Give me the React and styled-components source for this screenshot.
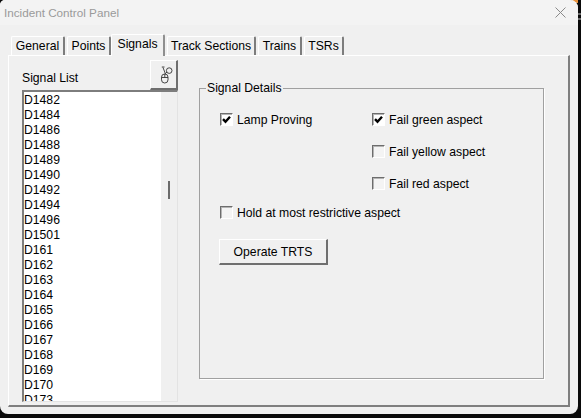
import React from "react";
import styled, { createGlobalStyle } from "styled-components";

const Global = createGlobalStyle`
  html, body { margin: 0; padding: 0; overflow: hidden; }
  html { background: #0a0a0a; }
  body {
    width: 581px;
    height: 418px;
    font-family: "Liberation Sans", Arial, sans-serif;
    font-size: 12.2px;
    color: #000;
    background:
      linear-gradient(#e8923c, #e8923c) no-repeat 572px 0 / 6px 3px,
      repeating-linear-gradient(#6a6a6a 0 2px, transparent 2px 5px) no-repeat 578px 13px / 3px 9px,
      #0a0a0a;
  }
  * { box-sizing: border-box; }
`;

const Window = styled.div`
  width: 578px;
  height: 414px;
  background: #f0f0f0;
  border-radius: 5px 8px 8px 8px;
  overflow: hidden;
  display: flex;
  flex-direction: column;
`;
const TitleBar = styled.div`
  height: 25px;
  flex: none;
  background: #f3f3f3;
  display: flex;
  align-items: center;
  justify-content: space-between;
  padding: 0 12px 0 4px;
  color: #9a9a9a;
  font-size: 11.7px;
`;
const Close = styled.svg`
  width: 11px;
  height: 11px;
  display: block;
`;
const Body = styled.div`
  flex: 1;
  min-height: 0;
  padding: 9px 8px 7px 8px;
  display: flex;
  flex-direction: column;
`;
const TabStrip = styled.div`
  height: 21px;
  flex: none;
  display: flex;
  align-items: flex-end;
  padding-left: 3px;
  gap: 2px;
  position: relative;
  z-index: 1;
`;
const Tab = styled.div`
  width: ${(p) => p.$w}px;
  height: ${(p) => (p.$active ? 22 : 19)}px;
  margin: ${(p) => (p.$active ? "0 0 -1px -2px" : "0")};
  background: #f0f0f0;
  border-top: 1px solid #ffffff;
  border-left: 1px solid #ffffff;
  border-right: 2px solid ${(p) => (p.$active ? "#8f8f8f" : "#7d7d7d")};
  border-radius: 2px 2px 0 0;
  text-align: center;
  line-height: 19px;
  white-space: nowrap;
`;
const Panel = styled.div`
  flex: 1;
  display: flex;
  background: #f0f0f0;
  border-top: 1px solid #ffffff;
  border-left: 1px solid #ffffff;
  border-right: 2px solid #7f7f7f;
  border-bottom: 2px solid #7f7f7f;
  padding: 4px 0 3px 13px;
  min-height: 0;
`;
const LeftColumn = styled.div`
  width: 156px;
  display: flex;
  flex-direction: column;
  min-height: 0;
`;
const ListHeader = styled.div`
  height: 30px;
  flex: none;
  display: flex;
  align-items: flex-end;
  justify-content: space-between;
`;
const ListLabel = styled.span`
  padding-bottom: 5px;
`;
const IconButton = styled.button`
  width: 28px;
  height: 30px;
  padding: 0 0 0 8px;
  background: #f0f0f0;
  border: 0;
  border-top: 1px solid #ffffff;
  border-left: 1px solid #ffffff;
  border-right: 2px solid #6f6f6f;
  border-bottom: 2px solid #6f6f6f;
  display: flex;
  align-items: center;
  justify-content: center;
`;
const ListBox = styled.div`
  flex: 1;
  display: flex;
  min-height: 0;
  border-top: 2px solid #7d7d7d;
  border-left: 2px solid #7d7d7d;
  border-right: 1px solid #e3e3e3;
  border-bottom: 1px solid #e3e3e3;
`;
const Rows = styled.div`
  width: 137px;
  background: #fff;
  overflow: hidden;
  padding-top: 1px;
`;
const Row = styled.div`
  height: 15px;
  line-height: 15px;
`;
const Scrollbar = styled.div`
  flex: 1;
  background: #f0f0f0;
  display: flex;
  justify-content: center;
  padding-top: 89px;
`;
const Thumb = styled.div`
  width: 2px;
  height: 18px;
  background: #6b6b6b;
`;
const Group = styled.fieldset`
  width: 345px;
  height: 298px;
  margin: 21px 0 0 21px;
  padding: 0;
  border: 1px solid #a0a0a0;
  border-radius: 0;
  box-shadow: 1px 1px 0 #fff;
  display: flex;
  flex-direction: column;
`;
const Legend = styled.legend`
  margin-left: 6px;
  padding: 0 1px;
  line-height: 15px;
`;
const Content = styled.div`
  padding: 16px 0 0 20px;
  display: flex;
  flex-direction: column;
`;
const AspectGrid = styled.div`
  display: grid;
  grid-template-columns: 152px 1fr;
  grid-auto-rows: 32px;
`;
const CheckRow = styled.label`
  display: flex;
  align-items: center;
  gap: 4px;
  height: 16px;
  grid-column: ${(p) => p.$col || "auto"};
`;
const Box = styled.span`
  width: 13px;
  height: 13px;
  flex: none;
  margin-top: -2px;
  background: ${(p) => (p.$checked ? "#fff" : "#f4f4f4")};
  border-top: 1px solid #6d6d6d;
  border-left: 1px solid #6d6d6d;
  border-right: 1px solid #ffffff;
  border-bottom: 1px solid #ffffff;
  box-shadow: inset 1px 1px 0 #b4b4b4;
  display: block;
  position: relative;
`;
const Tick = styled.svg`
  position: absolute;
  left: 1px;
  top: 1px;
  width: 9px;
  height: 9px;
`;
const HoldRow = styled.div`
  margin: -3px 0 0 0;
`;
const OperateButton = styled.button`
  margin: 18px 0 0 -1px;
  width: 109px;
  height: 26px;
  background: #f0f0f0;
  border: 0;
  border-top: 1px solid #fff;
  border-left: 1px solid #fff;
  border-right: 2px solid #6f6f6f;
  border-bottom: 2px solid #6f6f6f;
  font-family: inherit;
  font-size: inherit;
  color: #000;
  padding: 0;
`;

const Check = ({ checked, label, col }) => (
  <CheckRow $col={col}>
    <Box $checked={checked}>
      {checked && (
        <Tick viewBox="0 0 9 9">
          <path d="M1 4.2 L3.5 6.7 L8 1.8" fill="none" stroke="#000" strokeWidth="2.4" />
        </Tick>
      )}
    </Box>
    {label}
  </CheckRow>
);

const signals = ["D1482","D1484","D1486","D1488","D1489","D1490","D1492","D1494","D1496","D1501","D161","D162","D163","D164","D165","D166","D167","D168","D169","D170","D173"];
const tabs = [["General",54],["Points",44],["Signals",54,true],["Track Sections",89],["Trains",44],["TSRs",40]];

export default function App() {
  return (
    <>
      <Global />
      <Window>
        <TitleBar>
          Incident Control Panel
          <Close viewBox="0 0 11 11">
            <path d="M.5 .5 L10.5 10.5 M10.5 .5 L.5 10.5" stroke="#8a8a8a" strokeWidth="1" fill="none" />
          </Close>
        </TitleBar>
        <Body>
          <TabStrip>
            {tabs.map(([t, w, a]) => (
              <Tab key={t} $w={w} $active={a}>{t}</Tab>
            ))}
          </TabStrip>
          <Panel>
            <LeftColumn>
              <ListHeader>
                <ListLabel>Signal List</ListLabel>
                <IconButton aria-label="mouse">
                  <svg width="16" height="18" viewBox="0 0 16 18" fill="none" stroke="#333" strokeWidth="0.9">
                    <rect x="1.5" y="8" width="6.5" height="9" rx="3.2" />
                    <path d="M1.5 11.5 H8 M4.8 8 V11.5 M5.5 8 L3 1.5 M1.8 1 H4.5 M5.5 7.5 L7 6" />
                    <circle cx="9.2" cy="4.6" r="2.8" />
                  </svg>
                </IconButton>
              </ListHeader>
              <ListBox>
                <Rows>
                  {signals.map((s) => <Row key={s}>{s}</Row>)}
                </Rows>
                <Scrollbar><Thumb /></Scrollbar>
              </ListBox>
            </LeftColumn>
            <Group>
              <Legend>Signal Details</Legend>
              <Content>
                <AspectGrid>
                  <Check checked label="Lamp Proving" />
                  <Check checked label="Fail green aspect" />
                  <Check col="2" label="Fail yellow aspect" />
                  <Check col="2" label="Fail red aspect" />
                </AspectGrid>
                <HoldRow><Check label="Hold at most restrictive aspect" /></HoldRow>
                <OperateButton>Operate TRTS</OperateButton>
              </Content>
            </Group>
          </Panel>
        </Body>
      </Window>
    </>
  );
}
